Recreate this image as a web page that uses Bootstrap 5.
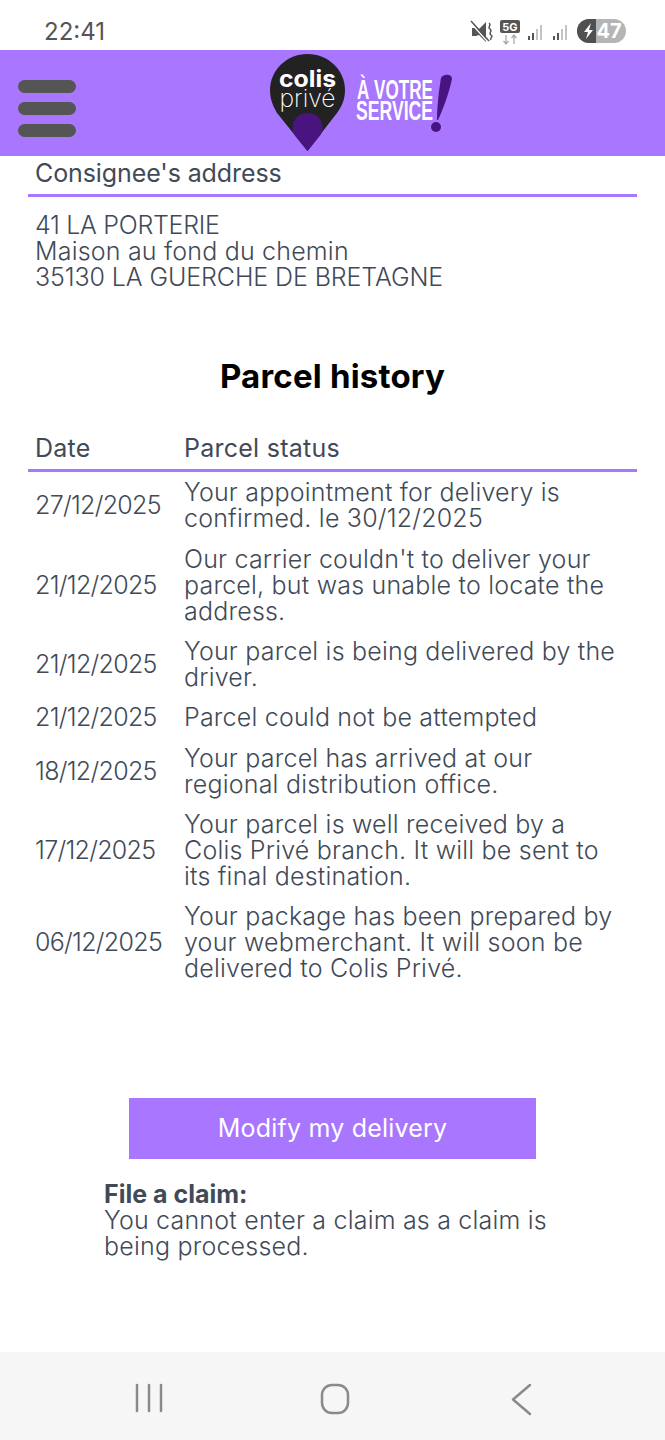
<!DOCTYPE html>
<html>
<head>
    <title>Colis Privé</title>
    <link href="https://cdn.jsdelivr.net/npm/bootstrap@5.3.3/dist/css/bootstrap.min.css" rel="stylesheet"/>
    <style>
        html, body { height: 1440px; overflow: hidden; }
        body { font-family: "Inter", "Liberation Sans", sans-serif; color: #414a57; font-size: 25px; font-weight: 350; line-height: 26px; letter-spacing: .2px; background: #fff; }
        .phone-status { height: 50px; padding: 19px 39px 0 44px; color: #555; font-size: 24px; font-weight: 400; line-height: 26px; letter-spacing: 0; }
        .phone-icons { margin-top: -1px; }
        .top-bar { height: 106px; background: #a876ff; padding: 10px 0 0 18px; position: relative; }
        .burger { width: 58px; gap: 9px; }
        .burger span { display: block; height: 13px; border-radius: 7px; background: #555; }
        .logo-wrap { position: absolute; left: 270px; top: 3px; }
        .logo-wrap text { letter-spacing: 0; }
        .section-title { margin: 0 28px; padding: 1px 7px 8px; border-bottom: 3px solid #a876ff; font-size: 25px; font-weight: 400; line-height: 32px; height: 41px; letter-spacing: -.1px; }
        .addr { padding: 15px 35px 0; height: 159px; }
        .caps-line { letter-spacing: -.3px; }
        .caps-long { letter-spacing: -.1px; }
        .history-title { font-size: 33px; font-weight: 700; color: #000; line-height: 40px; margin: 0; text-align: center; letter-spacing: .2px; }
        .history-table { width: 609px; margin: 33px 0 0 28px; border-collapse: collapse; table-layout: fixed; }
        .history-table th { font-weight: 400; padding: 4px 8px 6px; line-height: 30px; border-bottom: 3px solid #a876ff; letter-spacing: .25px; }
        .history-table th:first-child { padding-left: 7px; }
        .history-table td { padding: 7.2px 8px; vertical-align: middle; }
        .history-table td:first-child { padding: 7.2px 0 7.2px 7px; white-space: nowrap; letter-spacing: -.7px; }
        .modify-btn { display: block; width: 407px; height: 61px; margin: 109px auto 0 129px; background: #a876ff; color: #fff; font-size: 25px; font-weight: 400; line-height: 59px; border-radius: 0; padding: 0; border: 0; letter-spacing: .2px; }
        .claim { margin: 22px 104px 0; width: 470px; }
        .claim b { font-weight: 700; letter-spacing: 0; }
        .soft-keys { position: absolute; left: 0; right: 0; top: 1352px; height: 88px; background: #f6f6f6; }
    </style>
</head>
<body>
<div class="phone-status d-flex justify-content-between align-items-start">
    <span>22:41</span>
    <svg class="phone-icons" width="157" height="28" viewBox="0 0 157 28">
        <path d="M3 10h4l3 1 7-7v20l-7-7-3 1H3z" fill="#555"/>
        <path d="M1 4l17 19" stroke="#fff" stroke-width="1.5"/>
        <path d="M2 3l18 20" stroke="#555" stroke-width="1.500"/>
        <path d="M20 5c3 2-2 4 1 6s-2 4 1 6 -2 3 0 5" stroke="#555" stroke-width="1.5" fill="none"/>
        <rect x="31" y="2" width="20" height="13" rx="2" fill="#555"/>
        <text x="41" y="13" font-size="11" font-weight="700" fill="#fff" text-anchor="middle" font-family="Inter">5G</text>
        <path d="M37 17v9M34.500 23l2.500 3 2.500-3M45 26v-9M42.500 20l2.500-3 2.500 3" stroke="#aaa" stroke-width="1.3" fill="none"/>
        <g fill="#555"><rect x="59" y="18" width="2" height="4"/><rect x="63" y="15" width="2" height="7"/></g>
        <g fill="#c4c4c4"><rect x="67" y="11" width="2" height="11"/><rect x="71" y="7" width="2" height="15"/></g>
        <g fill="#555"><rect x="84" y="18" width="2" height="4"/><rect x="88" y="15" width="2" height="7"/></g>
        <g fill="#c4c4c4"><rect x="92" y="11" width="2" height="11"/><rect x="96" y="7" width="2" height="15"/></g>
        <rect x="108" y="1" width="49" height="24" rx="12" fill="#b5b5b5"/>
        <path d="M120 1a12 12 0 0 0 0 24h7V1z" fill="#505050"/>
        <path d="M122 5l-7 9h4l-2 7 7-9h-4z" fill="#fff"/>
        <text x="140" y="20" font-size="20" font-weight="700" fill="#fff" text-anchor="middle" font-family="Inter">47</text>
    </svg>
</div>
<header class="top-bar d-flex align-items-center">
    <div class="burger d-flex flex-column"><span></span><span></span><span></span></div>
    <svg class="logo-wrap" width="190" height="100" viewBox="0 0 190 100">
        <path d="M37.500 1C17 1 0 17 0 37c0 9 3 16 7 23l30.500 38L67 60c5-7 8-14 8-23C75 17 58 1 37.500 1z" fill="#222"/>
        <path d="M37.500 60c-8 0-15 6-15 15 0 3 1 5 2 7l13 16 13-16c1-2 2-4 2-7 0-9-7-15-15-15z" fill="#4a1480"/>
        <text x="9" y="34" font-size="23" font-weight="700" fill="#fff" font-family="Inter" textLength="57" lengthAdjust="spacingAndGlyphs">colis</text>
        <text x="9.500" y="54" font-size="24" font-weight="200" fill="#fff" font-family="Inter" textLength="56" lengthAdjust="spacingAndGlyphs">privé</text>
        <text x="87" y="45.500" font-size="27" font-weight="700" fill="#fff" font-family="'Liberation Sans'" textLength="76" lengthAdjust="spacingAndGlyphs">À VOTRE</text>
        <text x="86" y="67" font-size="27" font-weight="700" fill="#fff" font-family="'Liberation Sans'" textLength="77" lengthAdjust="spacingAndGlyphs">SERVICE</text>
        <path d="M171 25c1-4 11-5 11 1-3 14-9 30-14 41h-1c0-14 2-30 4-42z" fill="#4a1480"/>
        <circle cx="166" cy="74" r="5" fill="#4a1480"/>
    </svg>
</header>
<h2 class="section-title">Consignee's address</h2>
<div class="addr"><span class="caps-line">41 LA PORTERIE</span><br>Maison au fond du chemin<br><span class="caps-long">35130 LA GUERCHE DE BRETAGNE</span></div>
<h1 class="history-title">Parcel history</h1>
<table class="history-table">
    <colgroup><col width="148"><col></colgroup>
    <thead><tr><th>Date</th><th>Parcel status</th></tr></thead>
    <tbody>
    <tr><td>27/12/2025</td><td>Your appointment for delivery is confirmed. le 30/12/2025</td></tr>
    <tr><td>21/12/2025</td><td>Our carrier couldn't to deliver your parcel, but was unable to locate the address.</td></tr>
    <tr><td>21/12/2025</td><td>Your parcel is being delivered by the driver.</td></tr>
    <tr><td>21/12/2025</td><td>Parcel could not be attempted</td></tr>
    <tr><td>18/12/2025</td><td>Your parcel has arrived at our regional distribution office.</td></tr>
    <tr><td>17/12/2025</td><td>Your parcel is well received by a Colis Privé branch. It will be sent to its final destination.</td></tr>
    <tr><td>06/12/2025</td><td>Your package has been prepared by your webmerchant. It will soon be delivered to Colis Privé.</td></tr>
    </tbody>
</table>
<button class="btn modify-btn">Modify my delivery</button>
<div class="claim"><b>File a claim:</b><br>You cannot enter a claim as a claim is being processed.</div>
<div class="soft-keys">
    <svg width="665" height="88" viewBox="0 0 665 88">
        <path d="M137 33v26M149 33v26M161 33v26" stroke="#8a8a8a" stroke-width="2.500" stroke-linecap="round"/>
        <rect x="322" y="33" width="26" height="28" rx="10" fill="none" stroke="#8a8a8a" stroke-width="2.500"/>
        <path d="M530 33l-17 14.500 17 14.500" fill="none" stroke="#8a8a8a" stroke-width="2.500" stroke-linecap="round" stroke-linejoin="round"/>
    </svg>
</div>
<script src="https://cdn.jsdelivr.net/npm/bootstrap@5.3.3/dist/js/bootstrap.bundle.min.js"></script>
</body>
</html>
